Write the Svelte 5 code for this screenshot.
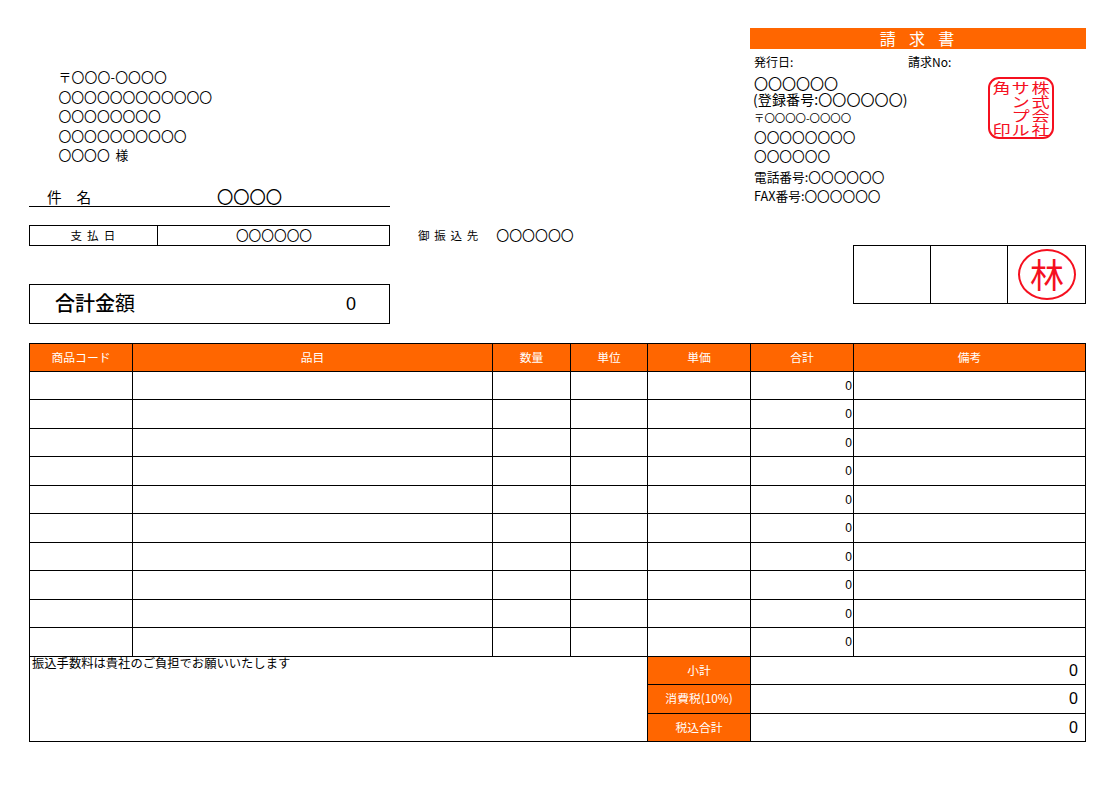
<script lang="ts">
  const columns = [
    { label: '商品コード' },
    { label: '品目' },
    { label: '数量' },
    { label: '単位' },
    { label: '単価' },
    { label: '合計' },
    { label: '備考' }
  ];
  const rows = Array.from({ length: 10 }, () => ({ total: 0 }));
  const totals = [
    { label: '小計', value: 0 },
    { label: '消費税(10%)', value: 0 },
    { label: '税込合計', value: 0 }
  ];
  const seal = ['角', 'サ', '株', '', 'ン', '式', '', 'プ', '会', '印', 'ル', '社'];
</script>

<div class="page">
  <section class="top">
    <div class="left">
      <div class="address">
        <div class="zip">〒〇〇〇-〇〇〇〇</div>
        <div>〇〇〇〇〇〇〇〇〇〇〇〇</div>
        <div>〇〇〇〇〇〇〇〇</div>
        <div>〇〇〇〇〇〇〇〇〇〇</div>
        <div>〇〇〇〇 &nbsp;様</div>
      </div>
      <div class="subject">
        <span class="subject-label">件　名</span>
        <span class="subject-value">〇〇〇〇</span>
      </div>
    </div>

    <div class="issuer">
      <h1>請 &nbsp;求 &nbsp;書</h1>
      <div class="meta">
        <span>発行日:</span>
        <span>請求No:</span>
      </div>
      <div class="company">
        <div class="name">〇〇〇〇〇〇</div>
        <div class="name reg">(登録番号:〇〇〇〇〇〇)</div>
        <div class="line post">〒〇〇〇〇-〇〇〇〇</div>
        <div class="line">〇〇〇〇〇〇〇〇</div>
        <div class="line">〇〇〇〇〇〇</div>
        <div class="line tel">電話番号:〇〇〇〇〇〇</div>
        <div class="line">FAX番号:〇〇〇〇〇〇</div>
      </div>
      <div class="seal">
        {#each seal as ch}
          <span>{ch}</span>
        {/each}
      </div>
    </div>
  </section>

  <section class="middle">
    <div class="left">
      <div class="due">
        <div class="due-label">支 払 日</div>
        <div class="due-value">〇〇〇〇〇〇</div>
      </div>
      <div class="sum">
        <span class="sum-label">合計金<span class="thin">額</span></span>
        <span class="sum-value">0</span>
      </div>
    </div>

    <div class="bank">
      <span class="bank-label">御 振 込 先</span>
      <span>〇〇〇〇〇〇</span>
    </div>

    <div class="approval">
      <div></div>
      <div></div>
      <div class="stamp-cell"><span class="stamp">林</span></div>
    </div>
  </section>

  <section class="sheet">
    {#each columns as col}
      <div class="cell head">{col.label}</div>
    {/each}

    {#each rows as row}
      <div class="cell"></div>
      <div class="cell"></div>
      <div class="cell"></div>
      <div class="cell"></div>
      <div class="cell"></div>
      <div class="cell num">{row.total}</div>
      <div class="cell"></div>
    {/each}

    <div class="cell note">振込手数料は貴社のご負担でお願いいたします</div>
    {#each totals as t}
      <div class="cell head total-label">{t.label}</div>
      <div class="cell total-value">{t.value}</div>
    {/each}
  </section>
</div>

<style>
  :global(body) {
    margin: 0;
    background: #fff;
  }

  .page {
    box-sizing: border-box;
    width: 1120px;
    height: 787px;
    padding: 28px 0 0 29px;
    color: #000;
    font-family: "Noto Sans CJK JP", "Liberation Sans", sans-serif;
    font-size: 12.7px;
    overflow: hidden;
  }

  .top {
    display: flex;
    height: 197px;
  }

  .left {
    width: 361px;
    flex: none;
  }

  .address {
    padding: 39px 0 0 29.5px;
    font-size: 12.8px;
    line-height: 19.5px;
    height: 117px;
  }

  .zip {
    letter-spacing: 0.2px;
  }

  .subject {
    display: flex;
    align-items: center;
    height: 20px;
    padding-top: 2px;
    border-bottom: 1px solid #000;
  }

  .subject-label {
    width: 170px;
    padding-left: 18px;
    font-size: 14.7px;
  }

  .subject-value {
    font-size: 16.3px;
  }

  .issuer {
    position: relative;
    width: 336px;
    margin-left: 360px;
    flex: none;
  }

  h1 {
    margin: 0;
    height: 21px;
    background: #ff6600;
    color: #fff;
    font-size: 16px;
    font-weight: 400;
    letter-spacing: 2px;
    line-height: 20px;
    text-align: center;
  }

  .meta {
    display: flex;
    height: 20px;
    margin-top: 3px;
    padding-left: 4px;
    font-size: 12px;
    line-height: 19px;
  }

  .meta span {
    width: 154px;
  }

  .company {
    margin-top: 3px;
    padding-left: 4px;
  }

  .name {
    font-size: 14px;
    line-height: 16px;
  }

  .reg {
    margin-left: -1px;
    letter-spacing: 0.1px;
  }

  .line {
    font-size: 12.7px;
    line-height: 19px;
  }

  .post {
    margin-top: 1px;
    font-size: 10.4px;
  }

  .tel {
    margin-top: 2px;
  }

  .seal {
    position: absolute;
    top: 49px;
    left: 238px;
    box-sizing: border-box;
    display: grid;
    grid-template-columns: repeat(3, 1fr);
    grid-template-rows: repeat(4, 1fr);
    width: 66px;
    height: 62px;
    padding: 1px 2px 3px;
    border: 2px solid #f5101f;
    border-radius: 11px;
    color: #f5101f;
  }

  .seal span {
    font-size: 14px;
    line-height: 14px;
    text-align: center;
    transform: scaleX(1.3);
  }

  .middle {
    display: flex;
    height: 118px;
  }

  .due {
    display: flex;
    box-sizing: border-box;
    height: 21px;
    border: 1px solid #000;
    font-size: 11.5px;
    line-height: 18px;
    text-align: center;
  }

  .due-label {
    width: 127px;
    border-right: 1px solid #000;
    font-size: 11.5px;
    letter-spacing: 1.3px;
  }

  .due-value {
    flex: 1;
    padding-left: 1px;
    font-size: 12.7px;
  }

  .sum {
    display: flex;
    align-items: center;
    box-sizing: border-box;
    height: 40px;
    margin-top: 38px;
    border: 1px solid #000;
  }

  .sum-label {
    width: 291px;
    margin-bottom: 3px;
    padding-left: 25px;
    font-size: 20px;
    font-weight: 500;
  }

  .thin {
    font-weight: 400;
  }

  .sum-value {
    font-family: "Liberation Sans", sans-serif;
    font-size: 18px;
  }

  .bank {
    flex: none;
    width: 463px;
    padding-left: 28px;
    box-sizing: border-box;
    font-size: 12.9px;
    line-height: 20px;
  }

  .bank-label {
    margin-right: 14px;
    font-size: 11.5px;
    letter-spacing: 1.1px;
  }

  .approval {
    display: grid;
    grid-template-columns: 76px 77px 78px;
    box-sizing: border-box;
    width: 233px;
    height: 59px;
    margin-top: 20px;
    border: 1px solid #000;
  }

  .approval > div + div {
    border-left: 1px solid #000;
  }

  .stamp-cell {
    display: flex;
    align-items: center;
    justify-content: center;
    padding-left: 1px;
  }

  .stamp {
    box-sizing: border-box;
    width: 58px;
    height: 51px;
    border: 2px solid #f5101f;
    border-radius: 50%;
    color: #f5101f;
    font-size: 34px;
    line-height: 45px;
    text-align: center;
  }

  .sheet {
    display: grid;
    grid-template-columns: 103px 360px 78px 77px 103px 103px 232px;
    grid-template-rows: 27.5px;
    grid-auto-rows: 28.5px;
    box-sizing: border-box;
    width: 1057px;
    border-top: 1px solid #000;
    border-left: 1px solid #000;
  }

  .cell {
    box-sizing: border-box;
    border-right: 1px solid #000;
    border-bottom: 1px solid #000;
    min-width: 0;
  }

  .head {
    background: #ff6600;
    color: #fff;
    font-size: 11.8px;
    line-height: 25px;
    text-align: center;
  }

  .num {
    padding: 4px 1px 0 0;
    font-family: "Liberation Sans", sans-serif;
    font-size: 12px;
    line-height: 20px;
    text-align: right;
  }

  .note {
    grid-column: 1 / 5;
    grid-row: span 3;
    padding-left: 2px;
    font-size: 12.3px;
    line-height: 12px;
  }

  .total-label {
    grid-column: 5;
  }

  .total-value {
    grid-column: 6 / 8;
    padding: 3px 7px 0 0;
    font-family: "Liberation Sans", sans-serif;
    font-size: 16px;
    line-height: 22px;
    text-align: right;
  }
</style>
